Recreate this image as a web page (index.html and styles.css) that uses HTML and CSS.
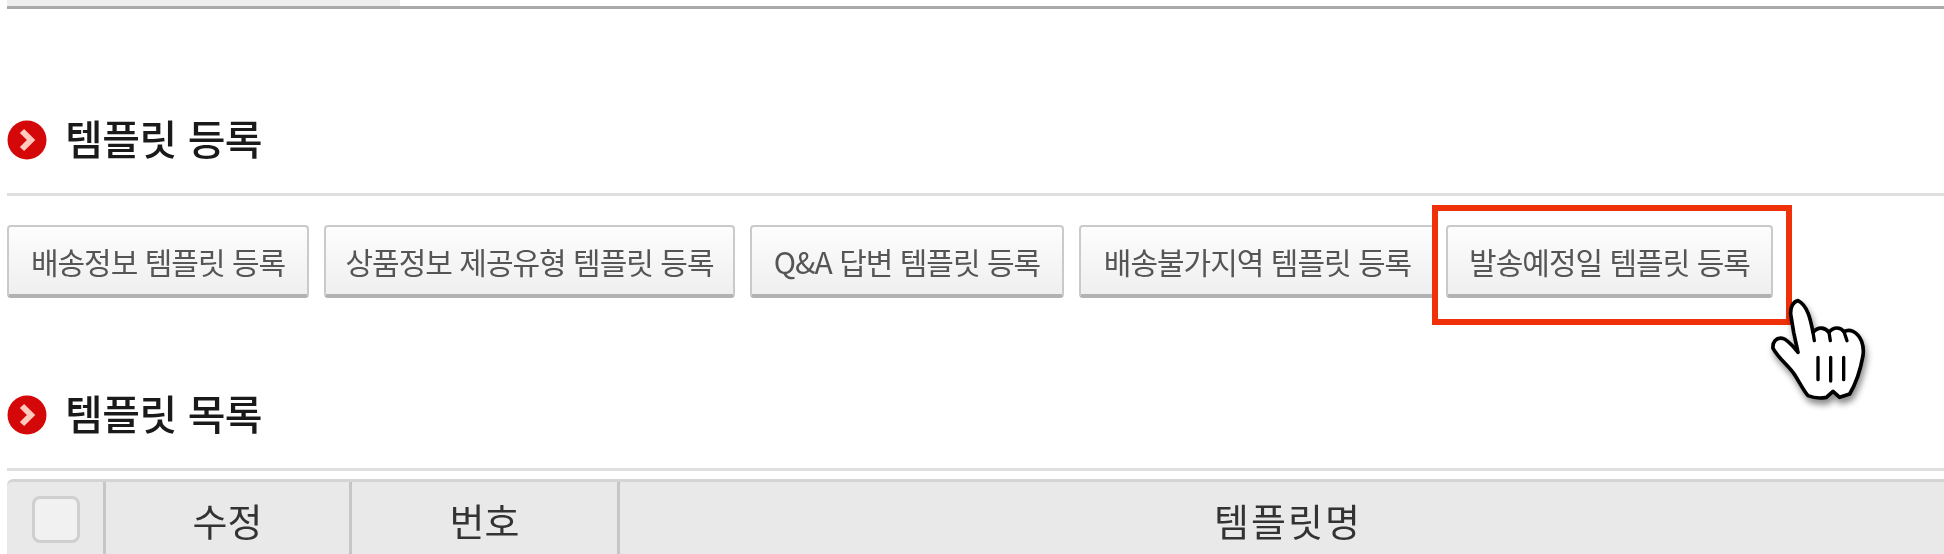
FILE: index.html
```html
<!DOCTYPE html>
<html lang="ko">
<head>
    <meta charset="UTF-8">
    <title>템플릿 관리</title>
    <link rel="stylesheet" href="styles.css">
</head>
<body>
    <div class="top-bar"><div class="top-tab"></div></div>

    <h2 class="section-title title-first">
        <svg class="bullet" viewBox="0 0 40 40"><circle cx="20" cy="20" r="19.5" fill="#d40808"/><path d="M15 11l9 9-9 9" fill="none" stroke="#ffc9bd" stroke-width="6"/></svg>
        <span class="title-text">템플릿 등록</span>
    </h2>
    <div class="btn-row">
        <button type="button" class="btn btn-a">배송정보 템플릿 등록</button>
        <button type="button" class="btn btn-b">상품정보 제공유형 템플릿 등록</button>
        <button type="button" class="btn btn-c">Q&amp;A 답변 템플릿 등록</button>
        <button type="button" class="btn btn-d">배송불가지역 템플릿 등록</button>
        <div class="btn-wrap">
            <button type="button" class="btn btn-e">발송예정일 템플릿 등록</button>
            <div class="highlight"></div>
            <svg class="hand" viewBox="0 0 420 360">
                <path d="M165 35C150 38 142 55 143 75L152 130L165 190C150 172 135 152 118 148C100 145 88 158 90 178C105 205 130 225 150 250C165 270 178 300 195 320C215 328 235 328 250 325L270 307L290 325L320 315C338 285 352 245 360 200C364 170 355 140 330 127C318 122 310 124 303 128C292 114 272 112 258 130C245 114 225 112 210 130C203 95 195 50 165 35Z" fill="#fff" stroke="#000" stroke-width="11" stroke-linejoin="round"/>
                <path d="M225 205V272M263 205V276M302 205V272M210 130L214 155M258 130L262 155M303 128L312 155" fill="none" stroke="#000" stroke-width="10" stroke-linecap="round"/>
            </svg>
        </div>
    </div>

    <h2 class="section-title title-second">
        <svg class="bullet" viewBox="0 0 40 40"><circle cx="20" cy="20" r="19.5" fill="#d40808"/><path d="M15 11l9 9-9 9" fill="none" stroke="#ffc9bd" stroke-width="6"/></svg>
        <span class="title-text">템플릿 목록</span>
    </h2>
    <div class="table-head">
        <div class="cell cell-check"><span class="checkbox"></span></div>
        <div class="cell cell-edit">수정</div>
        <div class="cell cell-num">번호</div>
        <div class="cell cell-name">템플릿명</div>
    </div>
</body>
</html>
```

FILE: styles.css
```css
html, body {
    height: 554px;
    overflow: hidden;
}
body {
    margin: 0;
    padding-left: 7px;
    background-color: #fff;
    color: #222;
    font-family: "Noto Sans CJK KR", "Liberation Sans", sans-serif;
    filter: blur(0.6px);
}
.top-bar {
    height: 6px;
    border-bottom: 3px solid #a9a9a9;
}
.top-tab {
    width: 393px;
    height: 6px;
    background-color: #eee;
}
.section-title {
    display: flex;
    align-items: center;
    gap: 18px;
    margin: 0;
    font-size: 41px;
    font-weight: 500;
    letter-spacing: -0.5px;
    line-height: 50px;
    color: #1a1a1a;
}
.title-text {
    line-height: 44px;
    padding-bottom: 6px;
}
.title-first {
    margin-top: 106px;
    padding-bottom: 28px;
    border-bottom: 3px solid #dfdfdf;
}
.title-second {
    margin-top: 92px;
    padding-bottom: 28px;
    border-bottom: 3px solid #dfdfdf;
}
.bullet {
    width: 40px;
    height: 40px;
    flex-shrink: 0;
}
.btn-row {
    display: flex;
    gap: 15px;
    margin-top: 29px;
}
.btn {
    display: block;
    height: 73px;
    padding: 0;
    border: 2px solid #cacaca;
    border-bottom: 4px solid #b2b2b2;
    border-radius: 4px;
    background: linear-gradient(#fdfdfd, #efefef);
    color: #555;
    font-family: inherit;
    font-size: 30px;
    letter-spacing: -1px;
}
.btn-a { width: 302px; }
.btn-b { width: 411px; }
.btn-c { width: 314px; }
.btn-d { width: 357px; }
.btn-e { width: 327px; }
.btn-wrap {
    position: relative;
    margin-left: -5px;
}
.highlight {
    position: absolute;
    left: -14px;
    top: -20px;
    width: 348px;
    height: 108px;
    border: 6px solid #f03008;
}
.hand {
    position: absolute;
    left: 297px;
    top: 64px;
    width: 140px;
    height: 120px;
    overflow: visible;
    filter: drop-shadow(2px 5px 3px rgba(0, 0, 0, 0.45));
}
.table-head {
    display: flex;
    height: 80px;
    margin-top: 8px;
    border-top: 3px solid #d4d4d4;
    border-top-left-radius: 6px;
    background-color: #e9e9e9;
    font-size: 38px;
    color: #333;
}
.cell {
    display: flex;
    align-items: center;
    justify-content: center;
    padding-bottom: 5px;
    border-right: 3px solid #c6c6c6;
    box-sizing: border-box;
}
.cell-check {
    width: 99px;
    padding-left: 2px;
}
.cell-edit { width: 246px; }
.cell-num { width: 268px; }
.cell-name {
    flex: 1;
    padding-left: 12px;
    border-right: none;
    letter-spacing: 2px;
}
.checkbox {
    width: 48px;
    height: 47px;
    border: 3px solid #cfcfcf;
    border-radius: 8px;
    background-color: #f1f1f1;
    box-sizing: border-box;
}
```
